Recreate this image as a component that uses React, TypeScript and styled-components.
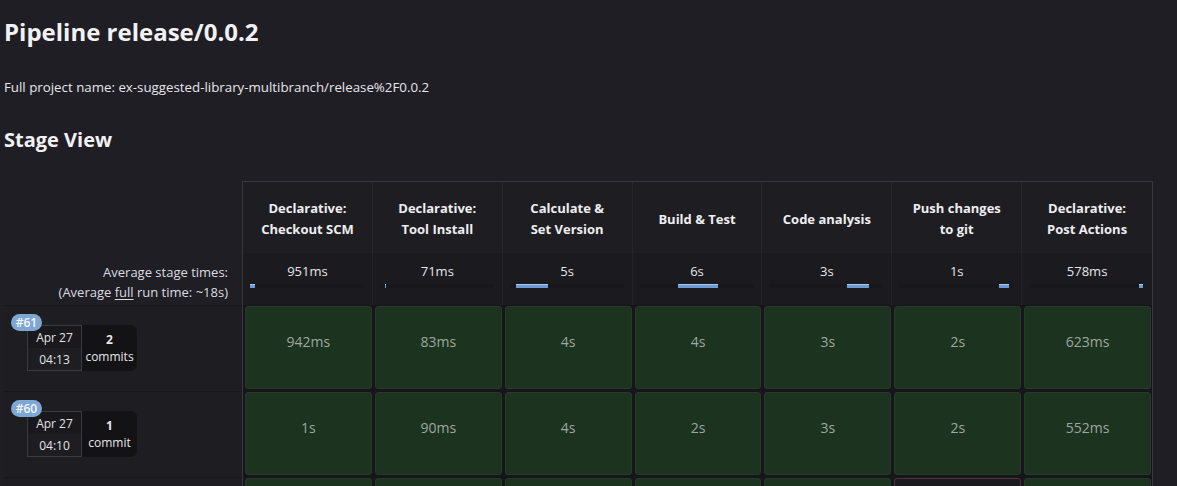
import React from 'react';
import styled, { createGlobalStyle } from 'styled-components';

const GlobalStyle = createGlobalStyle`
  html, body {
    margin: 0;
    padding: 0;
    background: #1f1e24;
    color: #e6e6e9;
    font-family: 'Open Sans', 'Noto Sans', sans-serif;
  }
`;

const Page = styled.div`
  padding: 0 4px;
  height: 486px;
  overflow: hidden;
`;

const Title = styled.h1`
  margin: 0;
  padding-top: 16px;
  font-size: 24px;
  line-height: 32px;
  font-weight: 700;
  color: #f2f2f4;
`;

const ProjectName = styled.p`
  margin: 30px 0 0;
  font-size: 13.3px;
  line-height: 18px;
  color: #e6e6e9;
`;

const SectionTitle = styled.h2`
  margin: 31px 0 0;
  font-size: 20px;
  line-height: 26px;
  font-weight: 700;
  color: #f2f2f4;
`;

const StageView = styled.div`
  display: flex;
  margin-top: 28px;
`;

const LeftColumn = styled.div`
  width: 238px;
  display: flex;
  flex-direction: column;
`;

const HeaderSpacer = styled.div`
  height: 72px;
`;

const AvgLabel = styled.div`
  height: 52px;
  box-sizing: border-box;
  padding: 9px 14px 0 0;
  text-align: right;
  font-size: 13px;
  line-height: 20px;
  color: #dcdce0;

  u {
    text-underline-offset: 2px;
  }
`;

const BuildRow = styled.div`
  height: 86px;
  box-sizing: border-box;
  border-top: 1px solid #18171b;
  background: #1e1d22;
  padding: 8px 0 0 7px;
`;

const Badge = styled.div`
  position: relative;
  z-index: 1;
  width: 31px;
  height: 17px;
  border-radius: 9px;
  background: #7fa7d3;
  color: #f4f7fb;
  font-size: 12px;
  font-weight: 600;
  line-height: 17px;
  text-align: center;
`;

const RunInfo = styled.div`
  display: flex;
  margin: -6px 0 0 16px;
  height: 46px;
`;

const DateBox = styled.div`
  width: 55px;
  box-sizing: border-box;
  border: 1px solid #3b3a3f;
  display: flex;
  flex-direction: column;
  font-size: 12px;
  color: #e2e2e5;
  text-align: center;
`;

const DatePart = styled.div<{ $dark?: boolean }>`
  flex: 1;
  display: flex;
  align-items: center;
  justify-content: center;
  background: ${p => (p.$dark ? '#19181c' : '#1e1d22')};
`;

const CommitBox = styled.div`
  width: 55px;
  background: #131215;
  border-radius: 0 6px 6px 0;
  display: flex;
  flex-direction: column;
  justify-content: center;
  align-items: center;
  font-size: 12px;
  line-height: 17px;
  color: #e6e6e9;

  b {
    font-weight: 700;
  }
`;

const Table = styled.div`
  width: 911px;
  box-sizing: border-box;
  border: 1px solid #38373c;
  border-bottom: none;
  display: flex;
  flex-direction: column;
`;

const HeaderRow = styled.div`
  display: flex;
  height: 71px;
  background: #1e1d22;
`;

const HeaderCell = styled.div`
  width: 130px;
  box-sizing: border-box;
  border-right: 1px solid #27262b;
  display: flex;
  align-items: center;
  justify-content: center;
  text-align: center;
  font-size: 13px;
  font-weight: 700;
  line-height: 21px;
  color: #eeeef1;
  padding-top: 3px;

  &:last-child {
    border-right: none;
  }
`;

const AvgRow = styled.div`
  display: flex;
  height: 52px;
  background: #1b1a1f;
`;

const AvgCell = styled.div`
  width: 130px;
  box-sizing: border-box;
  border-right: 1px solid #232227;
  padding-top: 8px;
  display: flex;
  flex-direction: column;
  align-items: center;

  &:last-child {
    border-right: none;
  }
`;

const AvgTime = styled.div`
  font-size: 13px;
  line-height: 20px;
  color: #e6e6e9;
`;

const Track = styled.div`
  position: relative;
  align-self: flex-start;
  margin: 3px 0 0 7px;
  width: 114px;
  height: 4px;
  background: #18171b;
`;

const Bar = styled.div`
  position: absolute;
  top: 0;
  bottom: 0;
  background: linear-gradient(#a8c6ec 0 1px, #6d9bd6 1px);
`;

const RunRow = styled.div`
  display: flex;
  height: 86px;
  box-sizing: border-box;
  background: #161519;
  padding: 1px 0 2px;
`;

const CellWrap = styled.div`
  width: 130px;
  box-sizing: border-box;
  padding: 0 1px 0 2px;
  display: flex;
`;

const StageCell = styled.div<{ $state?: 'success' | 'failed' }>`
  flex: 1;
  box-sizing: border-box;
  border-radius: 3px;
  border: 1px solid ${p => (p.$state === 'failed' ? '#54303a' : '#263a29')};
  background: ${p => (p.$state === 'failed' ? '#1b1a1f' : '#1c3320')};
  display: flex;
  justify-content: center;
  padding-top: 25px;
  font-size: 14px;
  line-height: 20px;
  color: #9ea89e;
`;

const stages = [
  { name: ['Declarative:', 'Checkout SCM'], avg: '951ms', left: 0, width: 5 },
  { name: ['Declarative:', 'Tool Install'], avg: '71ms', left: 5, width: 1 },
  { name: ['Calculate &', 'Set Version'], avg: '5s', left: 6, width: 32 },
  { name: ['Build & Test'], avg: '6s', left: 38, width: 40 },
  { name: ['Code analysis'], avg: '3s', left: 78, width: 22 },
  { name: ['Push changes', 'to git'], avg: '1s', left: 100, width: 10 },
  { name: ['Declarative:', 'Post Actions'], avg: '578ms', left: 110, width: 4 },
];

type Run = {
  id: string;
  date: string;
  time: string;
  commits: number;
  times: string[];
  failed?: number;
};

const runs: Run[] = [
  { id: '#61', date: 'Apr 27', time: '04:13', commits: 2, times: ['942ms', '83ms', '4s', '4s', '3s', '2s', '623ms'] },
  { id: '#60', date: 'Apr 27', time: '04:10', commits: 1, times: ['1s', '90ms', '4s', '2s', '3s', '2s', '552ms'] },
  { id: '#59', date: 'Apr 27', time: '04:02', commits: 1, times: ['', '', '', '', '', '', ''], failed: 5 },
];

const App: React.FC = () => {
  return (
    <>
      <GlobalStyle />
      <Page>
        <Title>Pipeline release/0.0.2</Title>
        <ProjectName>Full project name: ex-suggested-library-multibranch/release%2F0.0.2</ProjectName>
        <SectionTitle>Stage View</SectionTitle>
        <StageView>
          <LeftColumn>
            <HeaderSpacer />
            <AvgLabel>
              Average stage times:
              <br />
              (Average <u>full</u> run time: ~18s)
            </AvgLabel>
            {runs.map(run => (
              <BuildRow key={run.id}>
                <Badge>{run.id}</Badge>
                <RunInfo>
                  <DateBox>
                    <DatePart $dark>{run.date}</DatePart>
                    <DatePart>{run.time}</DatePart>
                  </DateBox>
                  <CommitBox>
                    <b>{run.commits}</b>
                    <span>{run.commits === 1 ? 'commit' : 'commits'}</span>
                  </CommitBox>
                </RunInfo>
              </BuildRow>
            ))}
          </LeftColumn>
          <Table>
            <HeaderRow>
              {stages.map(s => (
                <HeaderCell key={s.name.join(' ')}>
                  <div>
                    {s.name.map(line => (
                      <div key={line}>{line}</div>
                    ))}
                  </div>
                </HeaderCell>
              ))}
            </HeaderRow>
            <AvgRow>
              {stages.map(s => (
                <AvgCell key={s.name.join(' ')}>
                  <AvgTime>{s.avg}</AvgTime>
                  <Track>
                    <Bar style={{ left: s.left, width: s.width }} />
                  </Track>
                </AvgCell>
              ))}
            </AvgRow>
            {runs.map(run => (
              <RunRow key={run.id}>
                {run.times.map((t, i) => (
                  <CellWrap key={i}>
                    <StageCell $state={run.failed === i ? 'failed' : 'success'}>{t}</StageCell>
                  </CellWrap>
                ))}
              </RunRow>
            ))}
          </Table>
        </StageView>
      </Page>
    </>
  );
};

export default App;
